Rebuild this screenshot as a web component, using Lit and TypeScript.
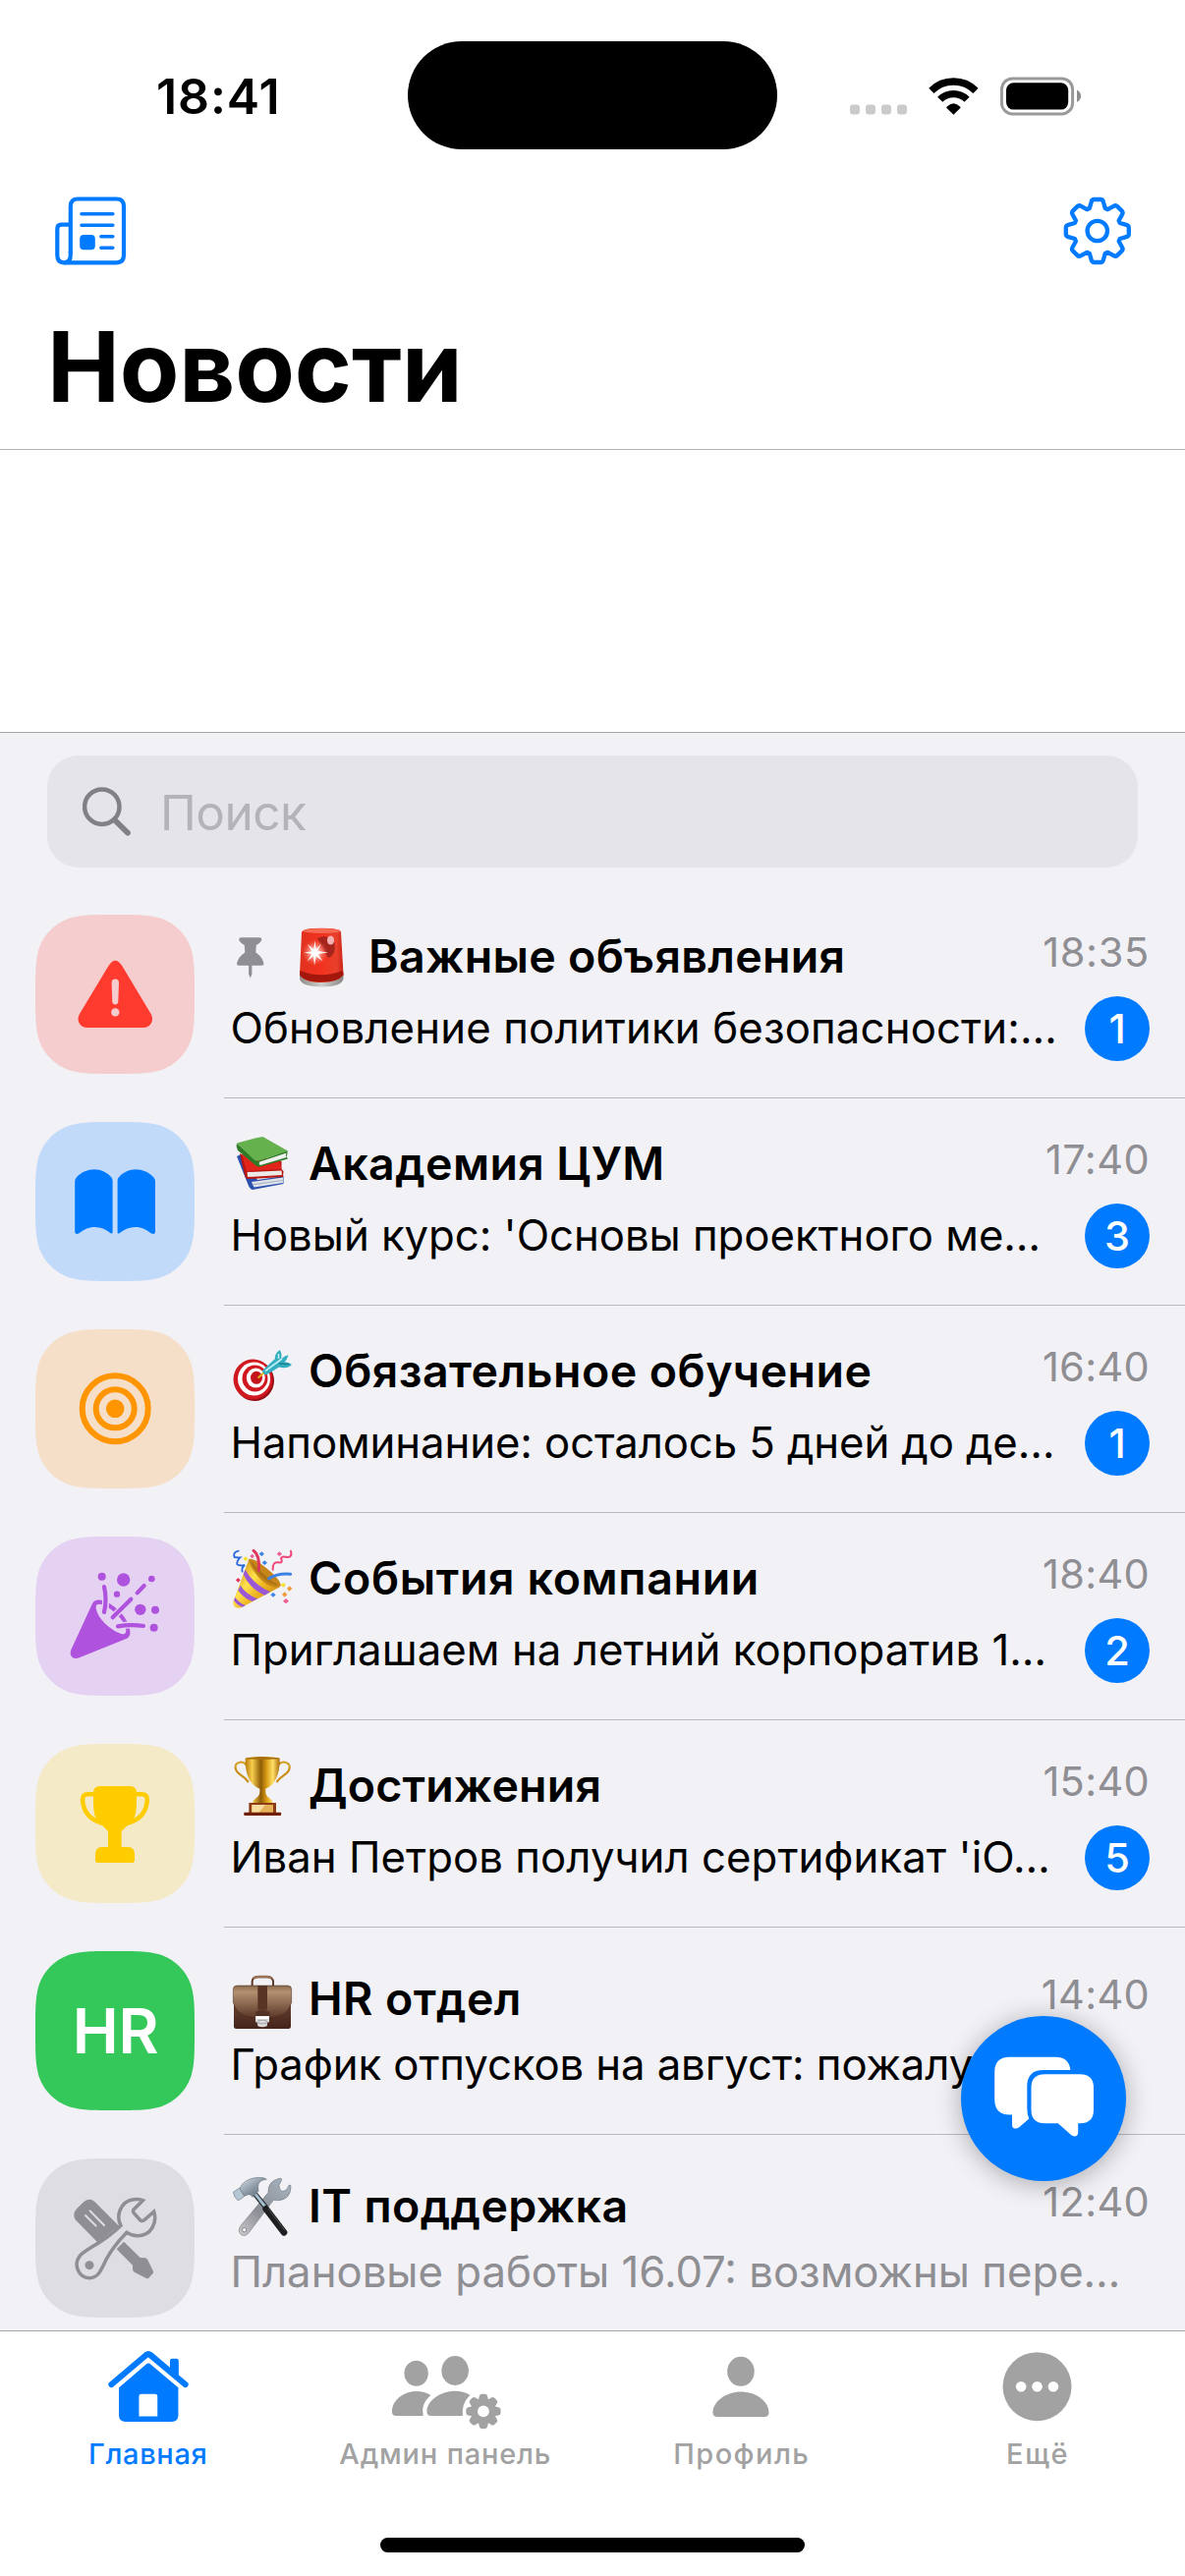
import { LitElement, html, svg, css, nothing, type TemplateResult } from "lit";
import { customElement, property } from "lit/decorators.js";
import { styleMap } from "lit/directives/style-map.js";

/** Continuous-corner rounded square, as used for the channel tiles. */
function squircle(size: number, r: number): string {
  const k = [1.528665, 1.08849296, 0.86840694, 0.63149379, 0.37282383, 0.16905956, 0.07491139].map((v) => v * r);
  const [e, b, c, d, f, g, h] = k;
  const s = size;
  return (
    `M${e} 0 L${s - e} 0 C${s - b} 0 ${s - c} 0 ${s - d} ${h} C${s - f} ${g} ${s - g} ${f} ${s - h} ${d} C${s} ${c} ${s} ${b} ${s} ${e}` +
    ` L${s} ${s - e} C${s} ${s - b} ${s} ${s - c} ${s - h} ${s - d} C${s - g} ${s - f} ${s - f} ${s - g} ${s - d} ${s - h} C${s - c} ${s} ${s - b} ${s} ${s - e} ${s}` +
    ` L${e} ${s} C${b} ${s} ${c} ${s} ${d} ${s - h} C${f} ${s - g} ${g} ${s - f} ${h} ${s - d} C0 ${s - c} 0 ${s - b} 0 ${s - e}` +
    ` L0 ${e} C0 ${b} 0 ${c} ${h} ${d} C${g} ${f} ${f} ${g} ${d} ${h} C${c} 0 ${b} 0 ${e} 0Z`
  );
}

/** Eight-toothed gear outline; `profile` is one tooth as [x, y] pairs seen from the centre. */
function gear(cx: number, cy: number, scale: number, profile: number[][]): string {
  let d = "";
  for (let i = 0; i < 8; i++) {
    const a = (i * Math.PI) / 4;
    const p = profile.map(([x, y]) => [
      cx + scale * (x * Math.cos(a) - y * Math.sin(a)),
      cy + scale * (x * Math.sin(a) + y * Math.cos(a)),
    ]);
    const n = (j: number) => `${p[j][0].toFixed(2)} ${p[j][1].toFixed(2)}`;
    d += `${i === 0 ? "M" : "L"}${n(0)} L${n(1)} Q${n(2)} ${n(3)} L${n(4)} Q${n(5)} ${n(6)} L${n(7)}`;
  }
  return d + "Z";
}
const TOOTH = [
  [-8, -22.9], [-6.1, -29.5], [-5.5, -32], [-3.2, -32], [3.2, -32], [5.5, -32], [6.1, -29.5], [8, -22.9],
];
const SMALL_TOOTH = [
  [-8, -22], [-6.4, -29], [-5.8, -32], [-3, -32], [3, -32], [5.8, -32], [6.4, -29], [8, -22],
];

const BLUE = "#007aff";

/* ---------- tile glyphs ---------- */

const warningGlyph = svg`
  <path fill="#ff3b30" d="M74.200 52.500 Q81.300 41 88.500 52.500 L117.600 101 Q120.500 106.500 117.500 111 Q115 115 109.500 115 H53 Q47.500 115 45 111 Q42 106.500 45 101Z"/>
  <path fill="#f5cdce" d="M77.600 69.500 Q77.600 65.600 81.300 65.600 Q85 65.600 85 69.500 L84.300 88.500 Q84 91.500 81.300 91.500 Q78.600 91.500 78.300 88.500Z"/>
  <circle fill="#f5cdce" cx="81.300" cy="99.400" r="4.200"/>`;

const bookGlyph = svg`
  <g fill="${BLUE}">
    <path d="M40.200 60.500 Q40.200 58 42 56.200 C47 51 53.500 48.300 59.800 48.300 C66.500 48.300 73.500 51.500 77.500 56.600 Q78.600 58 78.600 60 V112.400 Q78.300 114.300 76.400 113 C71.500 109 66.500 107 60.600 107 C54 107 49 109.500 44.500 113.300 Q40.700 115.300 40.200 112Z"/>
    <path d="M122 60.500 Q122 58 120.200 56.200 C115.200 51 108.700 48.300 102.400 48.300 C95.700 48.300 88.700 51.500 84.700 56.600 Q83.600 58 83.600 60 V112.400 Q83.900 114.300 85.800 113 C90.700 109 95.700 107 101.600 107 C108.200 107 113.200 109.500 117.700 113.300 Q121.500 115.300 122 112Z"/>
  </g>`;

const targetGlyph = svg`
  <g fill="none" stroke="#ff9500" stroke-width="6">
    <circle cx="81.200" cy="80.800" r="33.500"/>
    <circle cx="81.200" cy="80.800" r="19.500"/>
  </g>
  <circle cx="81.200" cy="80.800" r="9.300" fill="#ff9500"/>`;

const partyGlyph = svg`
  <svg viewBox="18 12 486 486" width="162" height="162">
    <path fill="#af52de" d="M192 217 L127 358 Q122 373 131 381 Q140 387 152 382 L297 323 Q309 317 307 300 Q298 250 244 216 Q203 195 192 217Z"/>
    <path fill="#e5d1f2" d="M203 228 Q203 215 220 219 C255 233 290 265 295 298 Q295 314 278 308 C245 297 204 258 203 228Z"/>
    <g fill="none" stroke="#e5d1f2" stroke-width="21" stroke-linecap="butt">
      <path d="M228 165 Q237 205 229 243"/><path d="M256 257 L310 203"/><path d="M270 286 Q310 279 348 285"/>
    </g>
    <g fill="none" stroke="#af52de" stroke-width="12.500" stroke-linecap="round">
      <path d="M228 165 Q237 205 228 243"/><path d="M254 259 L310 203"/><path d="M329 184 L350 162"/>
      <path d="M270 286 Q310 279 348 285"/>
    </g>
    <g fill="#af52de">
      <circle cx="221" cy="134" r="12"/><circle cx="287" cy="144" r="20"/><circle cx="373" cy="141" r="10"/>
      <circle cx="267" cy="188" r="9.500"/><circle cx="338.500" cy="235" r="17"/><circle cx="384" cy="236" r="12"/>
      <circle cx="380" cy="290" r="12"/>
    </g>
  </svg>`;

const trophyGlyph = svg`
  <svg viewBox="18 645 486 486" width="162" height="162">
    <path fill="#ffcc00" d="M195 794 Q195 774 216 774 H306 Q327 774 327 794 V828 Q326 862 317 876 Q312 885 300 893 L281 912 V960 H301 Q321 961 321 982 V1000 Q321 1008 313 1008 H209 Q201 1008 201 1000 V982 Q201 961 221 960 H240 V912 L222 894 Q210 886 205 876 Q196 862 195 828Z"/>
    <g fill="none" stroke="#ffcc00" stroke-width="13.500">
      <path d="M200 798.500 H178 Q162 798.500 162 815 Q165 872 224 888"/>
      <path d="M322 798.500 H343 Q359.500 798.500 359.500 815 Q357 872 298 888"/>
    </g>
  </svg>`;

const toolsGlyph = svg`
  <svg viewBox="18 651 486 486" width="162" height="162">
    <path fill="#8e8e93" d="M136 826 Q135 815 142 807 L166 783 Q184 769 199 783 L273 857 Q240 880 209 908 L142 840 Q136 833 136 826Z"/>
    <path stroke="#dedde2" stroke-width="6" stroke-linecap="round" d="M171 825 L203 857 M185 811 L228 855"/>
    <path fill="#8e8e93" d="M266 928 L288 905 L338 954 L354 955 Q359 956 361 961 L378 996 Q379 1000 376 1003 L364 1016 Q361 1019 357 1017 L320 998 Q315 994 315 989 L315 977Z"/>
    <path fill="#dedde2" stroke="#8e8e93" stroke-width="10.500" stroke-linejoin="miter" d="M346 779 L319 806 Q314 812 319 818 L336 837 Q343 845 351 839 L380 813 C391 848 371 887 330 887 Q312 887 297 877 C270 905 252 925 235 958 C217 996 209 1016 183 1016 C150 1016 132 975 155 947 C170 930 207 914 237 891 Q262 873 279 856 C264 828 275 782 318 776 Q333 774 346 779Z"/>
    <circle cx="183" cy="977" r="13.500" fill="#8e8e93"/>
  </svg>`;

/* ---------- title pictograms, 60 × 60 ---------- */

const sirenPicture = html`<svg class="emoji" viewBox="298 943 60 60">
  <defs>
    <linearGradient id="sb" x1="0" y1="0" x2="1" y2="0"><stop offset="0" stop-color="#e03120"/><stop offset=".5" stop-color="#f2331f"/><stop offset=".85" stop-color="#e8402c"/><stop offset="1" stop-color="#c92314"/></linearGradient>
    <radialGradient id="sg"><stop offset="0" stop-color="#fff"/><stop offset=".3" stop-color="#ffd9d2" stop-opacity=".85"/><stop offset="1" stop-color="#ff6a55" stop-opacity="0"/></radialGradient>
    <linearGradient id="sm" x1="0" y1="0" x2="1" y2="0"><stop offset="0" stop-color="#8f8a85"/><stop offset=".5" stop-color="#cfd0cc"/><stop offset="1" stop-color="#8a8783"/></linearGradient>
  </defs>
  <path fill="url(#sm)" d="M305 990 H349.500 V995 Q348 1003.500 327 1003.500 Q306 1003 305 995Z"/>
  <path fill="url(#sb)" d="M307 948 Q308 943.800 327.500 943.800 Q346 943.800 347 948 L349.500 991 Q344 999 327 999 Q310 999 305 991Z"/>
  <path fill="#a3170d" d="M305.300 987 Q326 995.500 349 987 L349.500 991.500 Q344 998.500 327 998.500 Q310 998.500 305 991.500Z"/>
  <ellipse cx="327.500" cy="946.500" rx="19" ry="2.600" fill="#f46a52"/>
  <path d="M323 954 Q332 949 340 958 Q343 970 334 974Z" fill="#8c1f19" opacity=".75"/>
  <ellipse cx="336.500" cy="956" rx="3.600" ry="4.600" fill="#f3b2b4"/>
  <circle cx="320.500" cy="968.500" r="13" fill="url(#sg)"/>
  <path fill="#fff" d="M320.500 956 L321.600 965.500 L327 959.500 L323 967 L334 968.500 L323.500 970 L328.500 977.500 L321.600 972 L320 982 L319 972 L312.500 977.500 L317.500 970 L309 968.500 L317.500 967.500 L313 960 L319.400 965.500Z"/>
</svg>`;

const booksPicture = html`<svg class="emoji" viewBox="237 1154 60 60">
  <path fill="#2a4fae" d="M241 1176 L245 1174 L262 1200 L288.500 1196 V1204 L257 1210 Q254 1209 253 1206Z"/>
  <path fill="#dfe3ea" d="M256 1202 L288 1197.500 L288 1203 L258.500 1207.500Z"/>
  <path fill="#a9b2c2" d="M256.500 1204.300 L288 1200 V1201 L257 1205.500Z"/>
  <path fill="#b8150f" d="M244 1173 L250 1176 L286.500 1181 L286.500 1189 L288.500 1191 L288 1197 L252 1199 Q249.500 1198 249 1195Z"/>
  <path fill="#e2251a" d="M246 1174 L284 1180 L286.500 1189 L251 1191Z"/>
  <path fill="#eceae8" d="M251.500 1192 L286.500 1190.500 L287 1195 L252 1197Z"/>
  <path fill="#2f7a26" d="M241 1163 L262.500 1181 L292.500 1170 V1173.500 Q291 1176 293 1178.500 L265 1186.500 Q262 1187 260 1185 L242 1170 Q240 1166 241 1163Z"/>
  <path fill="#64b14e" d="M241 1162.500 Q254 1158.500 267.500 1156 L293 1170.500 L263.500 1180.500 Q260 1181 258 1179Z"/>
  <path fill="#f1f1ef" d="M264.500 1181.500 L291.500 1172.500 Q290 1175 291.800 1177 L265 1185 Q262.500 1183.500 264.500 1181.500Z"/>
</svg>`;

const dartPicture = html`<svg class="emoji" viewBox="237 1365 60 60">
  <ellipse cx="259" cy="1404.500" rx="20" ry="20.500" fill="#8e0c12"/>
  <ellipse cx="257.500" cy="1403" rx="20" ry="20.500" fill="#cf1820"/>
  <ellipse cx="258.500" cy="1402.500" rx="16.500" ry="17" fill="#fff"/>
  <ellipse cx="259.500" cy="1402" rx="13" ry="13.500" fill="#cf1820"/>
  <ellipse cx="260.300" cy="1401.600" rx="9.500" ry="10" fill="#fff"/>
  <ellipse cx="261" cy="1401.300" rx="6" ry="6.500" fill="#c4141c"/>
  <path stroke="#e3b21a" stroke-width="2" d="M262.500 1401.500 L269 1396"/>
  <path fill="#33aec0" d="M267 1394 L280 1382 Q279 1377 284.800 1373 Q287.500 1377 286 1382.500 Q291 1378 293.500 1378.500 Q292 1383 289.500 1385.500 Q294 1385 297 1388 Q292 1393 284 1390.500 L271 1398.500 Q268 1398 267 1394Z"/>
  <path stroke="#bdeef3" stroke-width="1.600" fill="none" d="M270 1394.500 L287 1382 M283.500 1377 V1382"/>
  <path stroke="#1c7f92" stroke-width="1.400" fill="none" d="M284 1387 L294 1387.500"/>
</svg>`;

const popperPicture = html`<svg class="emoji" viewBox="621 48 180 180">
  <defs><linearGradient id="pc" x1="0" y1=".3" x2=".8" y2="1"><stop offset="0" stop-color="#d99a17"/><stop offset=".35" stop-color="#ffe14d"/><stop offset=".6" stop-color="#eeb421"/><stop offset="1" stop-color="#c98512"/></linearGradient></defs>
  <path fill="url(#pc)" d="M670 78 Q700 85 720 108 Q757 138 767 158 Q763 166 755 168 L646 226 Q636 229 628 224 Q620 219 622 208Z"/>
  <path fill="#9a58d6" d="M659 110 L653 124 Q672 168 718 188 L735 178 Q684 156 659 110Z"/>
  <path fill="#9a58d6" d="M644 158 L637 173 Q652 196 680 207 L697 199 Q662 186 644 158Z"/>
  <path fill="#9a58d6" d="M628 194 L624 204 Q634 219 650 224 L660 219 Q640 212 628 194Z"/>
  <path fill="#c6861a" d="M670 78 C666 90 690 125 714 147 C738 166 760 168 767 158 C768 146 742 120 724 106 C702 88 682 75 670 78Z"/>
  <path fill="#8f5a10" opacity=".45" d="M676 84 C676 98 698 124 720 142 C738 154 752 160 758 156 C735 145 700 110 676 84Z"/>
  <g fill="none" stroke-linecap="round">
    <path stroke="#2a6ade" stroke-width="5.500" d="M638 53 Q620 56 626 72 Q634 74 643 73 Q632 84 634 94 Q642 100 657 96 Q646 106 650 116"/>
    <path stroke="#e0365b" stroke-width="9" d="M684 52 Q704 66 700 112"/>
    <path stroke="#ee4577" stroke-width="6" d="M798 53 Q803 72 788 72 Q768 68 768 76 Q776 90 760 88 Q742 84 743 110"/>
    <path stroke="#3c82e4" stroke-width="9" d="M731 137 Q760 120 797 124"/>
  </g>
  <path fill="#3b84e6" d="M709 55l8 7-8 7-8-7zM718 82l8 7-8 7-8-7zM744 180l8 7-8 7-8-7z"/>
  <path fill="#f6e12e" d="M660 70l8 7-8 7-8-7zM775 150l8 7-8 7-8-7z"/>
  <path fill="#ef5d95" d="M680 62l7 7-7 7-7-7zM763 55l8 7-8 7-8-7zM783 198l9 8-9 8-9-8z"/>
  <path fill="#e5315a" d="M637 135l7 7-7 7-7-7z"/>
  <path fill="#f19a3e" d="M794 160l8 8-8 8-8-8zM779 178l8 8-8 8-8-8z"/>
</svg>`;

const cupPicture = html`<svg class="emoji" viewBox="621 681 180 180">
  <defs><linearGradient id="tg" x1="0" y1="0" x2="1" y2="0"><stop offset="0" stop-color="#b87a09"/><stop offset=".2" stop-color="#f7cf4c"/><stop offset=".45" stop-color="#8f5c08"/><stop offset=".62" stop-color="#d99c15"/><stop offset=".8" stop-color="#ffe06a"/><stop offset="1" stop-color="#a96c06"/></linearGradient></defs>
  <g fill="none" stroke="#c98e17" stroke-width="6.500" stroke-linecap="round">
    <path d="M662 706 C650 692 627 698 629 716 C631 736 657 740 667 757"/>
    <path d="M760 706 C772 692 796 698 794 716 C792 736 766 740 756 757"/>
  </g>
  <g fill="none" stroke="#f5d468" stroke-width="2">
    <path d="M658 702 C648 695 629 700 630 714"/><path d="M766 702 C776 695 793 700 793 714"/>
  </g>
  <path fill="url(#tg)" d="M659 686 Q711 676 764 686 C765 732 752 768 721 779 V788 Q721 800 733 808 Q742 814 742 823 H682 Q682 814 691 808 Q703 800 703 788 V779 C672 768 658 732 659 686Z"/>
  <ellipse cx="711.500" cy="686" rx="51" ry="4" fill="#a96f0b"/>
  <rect x="670" y="822" width="83" height="32" fill="#8e3c14"/>
  <rect x="679" y="828" width="65" height="24" fill="#e5b05a"/>
  <path fill="#f9dda0" d="M679 828 H720 L700 852 H679Z"/>
  <path fill="#701f05" d="M656 851 H767 Q770 856 767 861 H656 Q653 856 656 851Z"/>
</svg>`;

const briefcasePicture = html`<svg class="emoji" viewBox="621 72 180 180">
  <defs>
    <linearGradient id="bb" x1="0" y1="0" x2="0" y2="1"><stop offset="0" stop-color="#7a543d"/><stop offset="1" stop-color="#44241b"/></linearGradient>
    <linearGradient id="bf" x1="0" y1="0" x2="0" y2="1"><stop offset="0" stop-color="#8a6a4c"/><stop offset=".2" stop-color="#b39070"/><stop offset="1" stop-color="#5a3728"/></linearGradient>
  </defs>
  <path fill="none" stroke="#5f3a27" stroke-width="6" d="M680 121 V106 Q682 94 698 94 H725 Q741 94 744 106 V121"/>
  <path fill="none" stroke="#9a7356" stroke-width="7" d="M684 98 Q688 93 700 93 H724 Q736 93 740 98"/>
  <rect x="624" y="124" width="174" height="128" rx="7" fill="url(#bb)"/>
  <path fill="url(#bf)" stroke="#432419" stroke-width="1.500" d="M622 132 Q622 120 634 120 H788 Q800 120 800 132 V172 Q788 216 734 219 H690 Q634 216 622 172Z"/>
  <rect x="697" y="120" width="29" height="74" fill="#573424"/>
  <path fill="#432419" d="M690 200 Q711 188 733 200 V214 H690Z" opacity=".6"/>
  <path fill="#d9d9d9" d="M690 213 H732 V232 H727 L725 244 Q711 250 697 244 L695 232 H690Z"/>
  <path fill="#fff" d="M692 214 H730 V222 H692Z"/>
  <path fill="none" stroke="#8d8d8d" stroke-width="2" d="M699 226 H723 V236 H699Z"/>
</svg>`;

const hammerPicture = html`<svg class="emoji" viewBox="621 705 180 180">
  <defs>
    <linearGradient id="hm" x1="0" y1="0" x2="1" y2="1"><stop offset="0" stop-color="#dbe6ee"/><stop offset=".5" stop-color="#8c9aa6"/><stop offset="1" stop-color="#59636c"/></linearGradient>
    <linearGradient id="hw" x1="1" y1="0" x2="0" y2="1"><stop offset="0" stop-color="#a9b6c1"/><stop offset=".6" stop-color="#8b8e96"/><stop offset="1" stop-color="#d0c9cb"/></linearGradient>
  </defs>
  <path fill="url(#hw)" stroke="#5d646b" stroke-width="1.500" d="M729 752 Q727 718 762 709 Q771 707 770 713 L762 730 Q763 745 771 748 Q779 748 785 743 L792 730 Q799 727 798 735 Q797 772 762 776 Q751 776 745 775 L671 873 Q658 890 645 880 Q634 868 646 852Z"/>
  <circle cx="656" cy="866" r="6.500" fill="#f2f1f6" stroke="#5d646b" stroke-width="2"/>
  <path stroke="#2c3033" stroke-width="16" d="M689 757 L722 798"/>
  <path stroke="#a4bdcd" stroke-width="9" d="M688 755 L721 797"/>
  <path stroke="#1d1f20" stroke-width="20" stroke-linecap="round" d="M722 802 L777 874"/>
  <path stroke="#4a4f52" stroke-width="3" stroke-linecap="round" d="M729 802 L779 867"/>
  <path fill="url(#hm)" stroke="#56616a" stroke-width="1.500" d="M641 742 Q653 708 700 706 Q719 706 724 712 Q704 714 699 726 Q697 734 699 748 L681 766 Q676 757 668 758 L656 763Z"/>
  <path fill="#b5c7d3" stroke="#56616a" stroke-width="1.500" d="M622 751 L641 738 L656 764 L637 777 Q624 766 622 751Z"/>
</svg>`;

/* ---------- data ---------- */

interface Channel {
  title: string;
  preview: string;
  time: string;
  unread?: number;
  pinned?: boolean;
  muted?: boolean;
  initials?: string;
  tile: string;
  glyph?: TemplateResult | ReturnType<typeof svg>;
  picture: TemplateResult;
  titleTracking: number;
  previewTracking: number;
  timeTracking?: number;
}

const CHANNELS: Channel[] = [
  { title: "Важные объявления", preview: "Обновление политики безопасности:…", time: "18:35", unread: 1, pinned: true, tile: "#f5cdce", glyph: warningGlyph, picture: sirenPicture, titleTracking: 0.32, previewTracking: 0.16, timeTracking: 0.7 },
  { title: "Академия ЦУМ", preview: "Новый курс: 'Основы проектного ме…", time: "17:40", unread: 3, tile: "#c2daf9", glyph: bookGlyph, picture: booksPicture, titleTracking: 0.4, previewTracking: -0.03, timeTracking: 0.4 },
  { title: "Обязательное обучение", preview: "Напоминание: осталось 5 дней до де…", time: "16:40", unread: 1, tile: "#f6dfc8", glyph: targetGlyph, picture: dartPicture, titleTracking: 0.46, previewTracking: -0.09 },
  { title: "События компании", preview: "Приглашаем на летний корпоратив 1…", time: "18:40", unread: 2, tile: "#e5d1f2", glyph: partyGlyph, picture: popperPicture, titleTracking: 0.66, previewTracking: 0.07 },
  { title: "Достижения", preview: "Иван Петров получил сертификат 'iO…", time: "15:40", unread: 5, tile: "#f5eac8", glyph: trophyGlyph, picture: cupPicture, titleTracking: 0.18, previewTracking: 0.06 },
  { title: "HR отдел", preview: "График отпусков на август: пожалуйс…", time: "14:40", initials: "HR", tile: "#34c759", picture: briefcasePicture, titleTracking: 0.4, previewTracking: -0.09 },
  { title: "IT поддержка", preview: "Плановые работы 16.07: возможны пере…", time: "12:40", muted: true, tile: "#dedde2", glyph: toolsGlyph, picture: hammerPicture, titleTracking: 0.4, previewTracking: 0 },
];

/* ---------- channel row ---------- */

@customElement("channel-row")
export class ChannelRow extends LitElement {
  @property({ attribute: false }) channel!: Channel;

  static styles = css`
    :host { display: block; }
    .row { display: flex; height: 211px; padding-left: 36px; box-sizing: border-box; }
    .tile { flex: none; display: grid; width: 162px; height: 162px; margin-top: 24px; }
    .tile > * { grid-area: 1 / 1; }
    .shape { display: block; width: 162px; height: 162px; }
    .initials { place-self: center; padding-left: 1px; font-size: 63px; font-weight: 600; color: #fff; letter-spacing: -0.3px; line-height: 76px; }
    .content { flex: 1; min-width: 0; display: flex; flex-direction: column; margin-left: 30px; padding-left: 6.5px; padding-right: 36px; }
    .line { flex: none; height: 1px; background: #bab9be; margin-left: -6.5px; margin-right: -36px; }
    .body { flex: 1; display: flex; flex-direction: column; justify-content: center; gap: 12px; }
    .head { display: flex; align-items: flex-start; height: 58px; }
    .name { display: flex; align-items: center; height: 58px; flex: 1; padding-left: 2.5px; }
    .pin { width: 28px; height: 42px; margin-left: 4px; margin-right: 29px; margin-top: 3px; }
    .emoji { display: block; width: 60px; height: 60px; margin-top: 2px; overflow: visible; }
    .title { margin-left: 17px; font-size: 46.5px; line-height: 58px; font-weight: 600; color: #000; white-space: nowrap; }
    .time { font-size: 41.5px; line-height: 50px; color: #8e8e93; }
    .foot { display: flex; align-items: center; justify-content: space-between; min-height: 54px; }
    .preview { font-size: 43.7px; line-height: 54px; color: #000; white-space: nowrap; }
    .preview.muted { color: #8e8e93; }
    .badge { flex: none; width: 66px; height: 66px; border-radius: 33px; background: #007aff; color: #fff; font-size: 41.5px; line-height: 66px; font-weight: 500; text-align: center; }
  `;

  render() {
    const c = this.channel;
    return html`<div class="row">
      <div class="tile">
        <svg class="shape" viewBox="0 0 162 162"><path fill="${c.tile}" d="${squircle(162, 52.98)}"/>${c.glyph ?? nothing}</svg>
        ${c.initials ? html`<span class="initials">${c.initials}</span>` : nothing}
      </div>
      <div class="content">
        <div class="body">
          <div class="head">
            <div class="name">
              ${c.pinned
                ? html`<svg class="pin" viewBox="241 952.500 28 42"><path fill="#8e8e93" d="M245 952.700 H264.500 Q266.500 953 266.300 955.200 Q265.600 957.500 260.800 960.600 L260.300 968 Q267 972.500 268.500 979 Q268.500 981.200 266.500 981.300 H256.400 V990 L254.800 994 L253.100 990 V981.300 H243 Q241 981.200 241 979 Q242.500 972.500 249.300 968 L248.800 960.600 Q244 957.500 243.200 955.200 Q243 953 245 952.700Z"/></svg>`
                : nothing}
              ${c.picture}
              <span class="title" style=${styleMap({ letterSpacing: `${c.titleTracking}px` })}>${c.title}</span>
            </div>
            <span class="time" style=${styleMap({ letterSpacing: `${c.timeTracking ?? 0.3}px` })}>${c.time}</span>
          </div>
          <div class="foot">
            <span class="preview ${c.muted ? "muted" : ""}" style=${styleMap({ letterSpacing: `${c.previewTracking}px` })}>${c.preview}</span>
            ${c.unread ? html`<span class="badge">${c.unread}</span>` : nothing}
          </div>
        </div>
        <div class="line"></div>
      </div>
    </div>`;
  }
}

/* ---------- tab bar ---------- */

const TABS = [
  {
    label: "Главная", cx: 150.75, tracking: 0.64, active: true,
    icon: svg`
      <path fill="none" stroke="currentColor" stroke-width="6.200" stroke-linecap="round" stroke-linejoin="round" d="M113.200 2427 L148.600 2397 Q150.700 2395.300 152.800 2397 L188.300 2427"/>
      <path fill="currentColor" d="M172.700 2403 Q172.700 2400.700 175 2400.700 H179.300 Q181.600 2400.700 181.600 2403 V2420 L172.700 2413Z"/>
      <path fill="currentColor" fill-rule="evenodd" d="M150.700 2405.500 Q152 2405.500 153 2406.600 L181.200 2430.300 V2458.500 Q181.200 2465 174.500 2465 H127.500 Q120.800 2465 120.800 2458.500 V2430.300 L148.500 2406.600 Q149.500 2405.500 150.700 2405.500Z M143.500 2436.700 Q141.200 2436.700 141.200 2439 V2459.400 H160 V2439 Q160 2436.700 157.700 2436.700Z"/>`,
  },
  {
    label: "Админ панель", cx: 452.25, tracking: 0.8,
    icon: svg`
      <g fill="currentColor">
        <ellipse cx="423.900" cy="2415.700" rx="12.200" ry="13"/>
        <ellipse cx="463.400" cy="2413" rx="13.800" ry="15"/>
        <path d="M438.600 2438 Q432.500 2434 424 2434 C410 2434 399.200 2444 399.200 2454.500 Q399.200 2459 403.500 2459 H431 Q428 2447 438.600 2438Z"/>
        <path d="M478.600 2437.700 Q472 2433.800 463.500 2433.800 C448 2433.800 434.700 2444 434.700 2454.500 Q434.700 2459 439 2459 H471.200 Q469.500 2447 478.600 2437.700Z"/>
      </g>
      <path fill="currentColor" stroke="currentColor" stroke-width="1.600" stroke-linejoin="round" d="${gear(492.2, 2454.3, 0.525, SMALL_TOOTH)}"/>
      <circle cx="492.200" cy="2454.300" r="5.900" fill="#fff"/>`,
  },
  {
    label: "Профиль", cx: 753.75, tracking: 1.44,
    icon: svg`
      <g fill="currentColor">
        <ellipse cx="753.700" cy="2413.800" rx="13.800" ry="15"/>
        <path d="M753.700 2434.400 C769 2434.400 782.200 2444.500 782.200 2455.500 Q782.200 2460 777.500 2460 H730 Q725.200 2460 725.200 2455.500 C725.200 2444.500 738.500 2434.400 753.700 2434.400Z"/>
      </g>`,
  },
  {
    label: "Ещё", cx: 1055.25, tracking: 1.76,
    icon: svg`
      <circle cx="1055.800" cy="2429.200" r="35" fill="currentColor"/>
      <g fill="#fff"><circle cx="1039.400" cy="2429.200" r="5.300"/><circle cx="1055.800" cy="2429.200" r="5.300"/><circle cx="1072.200" cy="2429.200" r="5.300"/></g>`,
  },
];

@customElement("tab-bar")
export class TabBar extends LitElement {
  static styles = css`
    :host { display: flex; flex-direction: column; align-items: center; background: #fff; border-top: 1px solid #a7a7ab; height: 249px; }
    .tabs { align-self: stretch; display: grid; grid-template-columns: repeat(4, 1fr); }
    .tab { display: flex; flex-direction: column; align-items: center; padding-top: 15px; color: #a2a2a2; }
    .tab.active { color: #007aff; }
    .icon { display: block; width: 120px; height: 88px; }
    .label { padding-left: 2px; font-size: 29px; font-weight: 500; line-height: 43px; white-space: nowrap; }
    .active .label { padding-left: 0; }
    .indicator { margin-top: 64px; width: 432px; height: 15px; border-radius: 7.5px; background: #000; }
  `;
  render() {
    return html`
      <div class="tabs">
        ${TABS.map(
          (t) => html`<div class="tab ${t.active ? "active" : ""}">
            <svg class="icon" viewBox="${t.cx - 60} 2388 120 88">${t.icon}</svg>
            <span class="label" style=${styleMap({ letterSpacing: `${t.tracking}px` })}>${t.label}</span>
          </div>`,
        )}
      </div>
      <div class="indicator"></div>`;
  }
}

/* ---------- screen ---------- */

@customElement("app-root")
export class AppRoot extends LitElement {
  static styles = css`
    :host { display: block; width: 1206px; height: 2622px; font-family: Inter, "Liberation Sans", sans-serif; background: #fff; color: #000; }
    .screen { position: relative; display: flex; flex-direction: column; height: 2622px; overflow: hidden; }
    .status { flex: none; display: grid; grid-template-columns: 415px 376px 415px; align-items: center; height: 194px; }
    .clock { padding-left: 159px; padding-top: 2px; font-size: 50px; font-weight: 600; letter-spacing: 0.9px; line-height: 60px; }
    .island { height: 110px; border-radius: 55px; background: #000; }
    .signals { display: flex; align-items: center; gap: 22px; padding-left: 74px; padding-top: 1px; }
    .signals svg { display: block; }
    .nav { flex: none; display: flex; justify-content: space-between; align-items: center; height: 82px; padding: 0 52px 0 54px; }
    .nav svg { display: block; width: 76px; height: 76px; }
    .heading { flex: none; margin: 0; height: 181px; padding: 37px 0 0 48px; box-sizing: border-box; font-size: 99px; line-height: 120px; font-weight: 700; letter-spacing: -0.16px; }
    .stories { flex: none; height: 289px; box-sizing: border-box; border-top: 1px solid #b3b3b3; border-bottom: 1px solid #a6a6aa; }
    .list { flex: 1; min-height: 0; overflow: hidden; background: #f2f1f6; }
    .search { display: flex; align-items: center; gap: 29px; height: 114px; margin: 23px 48px 24px; padding-left: 36px; border-radius: 32px; background: #e5e4e9; color: #b4b3b8; font-size: 49.5px; letter-spacing: -0.5px; box-sizing: border-box; line-height: 60px; }
    .search svg { display: block; width: 50px; height: 50px; }
    .search span { padding-top: 2px; }
    .fab { position: absolute; left: 978px; top: 2052px; width: 168px; height: 168px; border-radius: 50%; background: #007aff; box-shadow: 0 3px 26px rgba(0, 0, 0, 0.3); }
    .fab svg { display: block; width: 168px; height: 168px; }
  `;

  render() {
    return html`<div class="screen">
      <div class="status">
        <span class="clock">18:41</span>
        <div class="island"></div>
        <div class="signals">
          <svg width="58" height="40" viewBox="865 78 58 40" fill="#cbcbcb">
            ${[865, 881, 897, 913].map((x) => svg`<rect x="${x}" y="106.500" width="10" height="10" rx="3.200"/>`)}
          </svg>
          <svg width="51" height="40" viewBox="945 78 51 40">
            <g fill="none" stroke="#000" stroke-width="7.300">
              <path d="M947.800 92.400 A31.900 31.900 0 0 1 993 92.400"/>
              <path d="M956.700 101.300 A19.300 19.300 0 0 1 984.100 101.300"/>
            </g>
            <path d="M963.500 108.800 Q970.400 101.800 977.300 108.800 Q977.900 109.300 977.300 109.900 L970.400 116.700 L963.500 109.900 Q962.900 109.300 963.500 108.800Z"/>
          </svg>
          <svg width="82" height="40" viewBox="1018 78 82 40">
            <rect x="1019.400" y="79.900" width="72.200" height="36" rx="11" fill="none" stroke="#9a9a9a" stroke-width="3"/>
            <rect x="1024" y="84.200" width="63.200" height="27.400" rx="7.500"/>
            <path fill="#8d8d8d" d="M1096 91.500 Q1100 93.500 1100 97.800 Q1100 102 1096 104Z"/>
          </svg>
        </div>
      </div>
      <div class="nav">
        <svg viewBox="54 197.500 76 76">
          <g fill="none" stroke="${BLUE}" stroke-width="4.200">
            <path d="M71.800 258 V210.500 Q71.800 203 79.300 203 H118.500 Q126 203 126 210.500 V260.300 Q126 267.800 118.500 267.800 H65 Q58.300 267.800 58.300 260.300 V233.500 Q58.300 229.200 62.600 229.200 H71.800"/>
            <path d="M71.800 256 V260 Q71.800 267.800 65 267.800"/>
            <path stroke-width="3.600" stroke-linecap="round" d="M83 218.300 H114.800 M83 229.700 H114.800 M102.900 241.200 H114.800 M102.900 252.800 H114.800"/>
          </g>
          <rect x="81.200" y="239.400" width="15.600" height="15.400" rx="4" fill="${BLUE}"/>
        </svg>
        <svg viewBox="1078 197.500 76 76">
          <g fill="none" stroke="${BLUE}" stroke-width="4.300" stroke-linejoin="round">
            <path d="${gear(1116.8, 235.5, 1, TOOTH)}"/>
            <circle cx="1116.800" cy="235.500" r="10.200"/>
          </g>
        </svg>
      </div>
      <h1 class="heading">Новости</h1>
      <div class="stories"></div>
      <div class="list">
        <div class="search">
          <svg viewBox="84 801.500 50 50">
            <circle cx="103.800" cy="821.700" r="17.700" fill="none" stroke="#808085" stroke-width="4.500"/>
            <path stroke="#808085" stroke-width="5.800" stroke-linecap="round" d="M117 835.500 L130 848.200"/>
          </svg>
          <span>Поиск</span>
        </div>
        ${CHANNELS.map((c) => html`<channel-row .channel=${c}></channel-row>`)}
      </div>
      <tab-bar></tab-bar>
      <div class="fab">
        <svg viewBox="978 2052 168 168" fill="#fff">
          <path d="M1012.200 2109 Q1012.200 2093.700 1027.500 2093.700 H1074 Q1088 2093.700 1089.400 2107 H1062 Q1045.300 2107 1045.300 2123.500 V2146 Q1045.300 2152 1047.300 2156.600 L1037.500 2165 Q1034 2167.500 1031.300 2166 Q1030 2165 1030 2162.500 V2152.400 H1027.500 Q1012.200 2152.400 1012.200 2137Z"/>
          <path d="M1049.500 2125 Q1049.500 2111.300 1063.500 2111.300 H1099 Q1113 2111.300 1113 2125 V2147.500 Q1113 2161.300 1099 2161.300 H1097.200 V2170.500 Q1097 2174.500 1093.500 2174.500 Q1091.500 2174.300 1090 2173 L1076.800 2161.300 H1063.500 Q1049.500 2161.300 1049.500 2147.500Z"/>
        </svg>
      </div>
    </div>`;
  }
}
